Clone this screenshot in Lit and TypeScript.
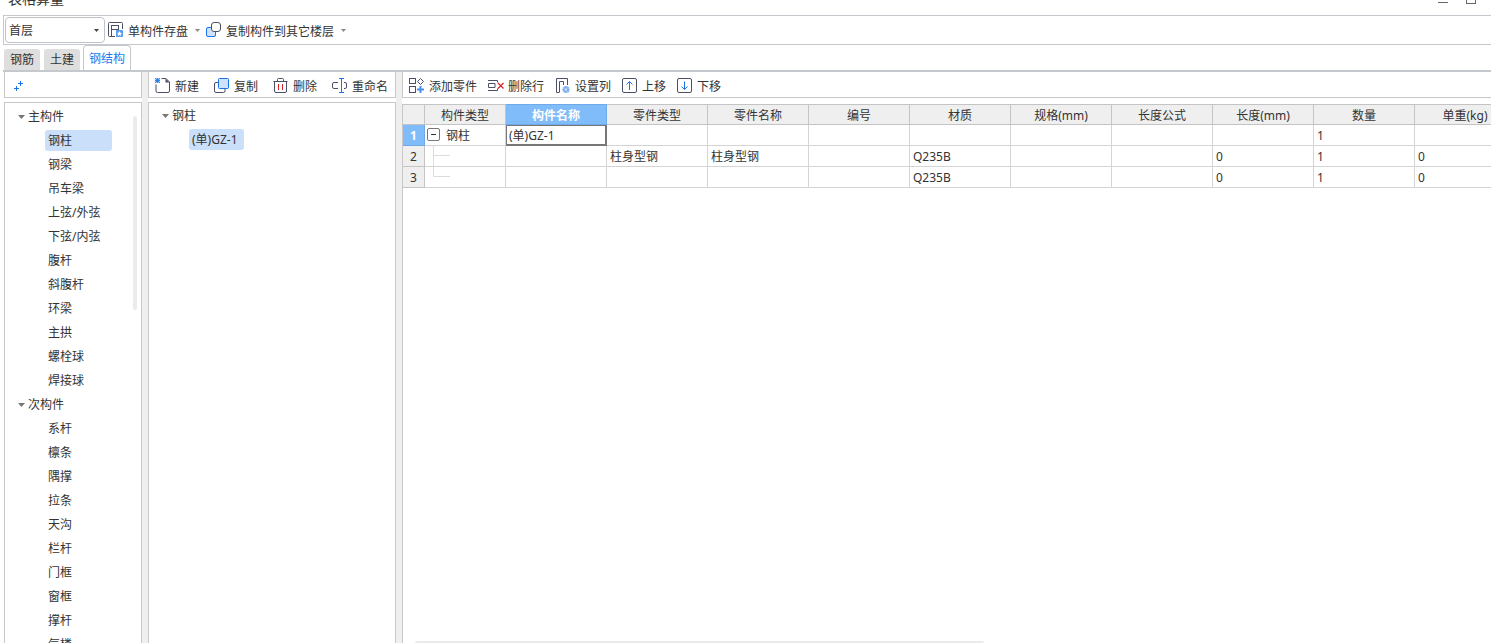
import { LitElement, html, svg, css, nothing } from "lit";
import { customElement, state } from "lit/decorators.js";
import { classMap } from "lit/directives/class-map.js";

const DARK = "#4b5066";
const BLUE = "#1a73e8";
const PALE = "#cfe2fb";

const icons: Record<string, unknown> = {
  save: svg`
    <g fill="none" stroke="${DARK}"><path d="M7 14.500H1.500a1 1 0 0 1-1-1v-12a1 1 0 0 1 1-1h12a1 1 0 0 1 1 1V7"/><path d="M3.500 3V14M3.500 3.500H11M10.500 3.500v4M3.500 7.500H11"/></g>
    <rect x="8" y="8" width="7" height="7" rx=".5" fill="#5d9df0"/>
    <path d="M11.500 9l.8 1.700 1.800.2-1.300 1.200.4 1.800-1.700-.9-1.700.9.4-1.800-1.300-1.200 1.800-.2z" fill="#fff"/>`,
  copyFloor: svg`
    <rect x=".5" y="5.500" width="9" height="9" rx="1.500" fill="${PALE}" stroke="${BLUE}"/>
    <rect x="5.500" y=".5" width="9" height="9" rx="2.500" fill="#fff" stroke="${DARK}"/>`,
  fresh: svg`
    <path d="M6.500 .5H11L14.500 4v9a1.500 1.500 0 0 1-1.500 1.500H2.500A1.500 1.500 0 0 1 1 13V6.500" fill="none" stroke="${DARK}"/>
    <path d="M10.500 .5V4.500H14.500z" fill="${DARK}"/>
    <rect width="5" height="5" fill="#a9cbf7"/><path d="M0 0l5 5M5 0L0 5M2.500 0v5M0 2.500h5" stroke="${BLUE}" stroke-width=".8" fill="none"/>`,
  copy: svg`
    <path d="M4 4.500H2A1.500 1.500 0 0 0 .5 6v7A1.500 1.500 0 0 0 2 14.500h7.500A1.500 1.500 0 0 0 11 13v-2" fill="none" stroke="${DARK}"/>
    <rect x="4.500" y=".5" width="10" height="10" rx="1" fill="${PALE}" stroke="${BLUE}"/>`,
  remove: svg`
    <path d="M.5 3.500h14M4.500 3V1.500a1 1 0 0 1 1-1h4a1 1 0 0 1 1 1V3M1.500 3.500v9.500A1.500 1.500 0 0 0 3 14.500h9a1.500 1.500 0 0 0 1.500-1.500V3.500" fill="none" stroke="${DARK}"/>
    <path d="M5.500 6v6M9.500 6v6" stroke="#d9222a" fill="none"/>`,
  rename: svg`
    <path d="M6 4.500H2A1.500 1.500 0 0 0 .5 6v3A1.500 1.500 0 0 0 2 10.500h4M12 4.500h1A1.500 1.500 0 0 1 14.500 6v3a1.500 1.500 0 0 1-1.500 1.500h-1" fill="none" stroke="${DARK}"/>
    <path d="M7 .5h5M7 14.500h5M9.500 .5v14" stroke="${BLUE}" fill="none"/>`,
  addPart: svg`
    <g fill="none" stroke="${DARK}"><rect x=".5" y=".5" width="6" height="5"/><rect x=".5" y="8.500" width="6" height="6"/><path d="M11.500 .5l3 3-3 3-3-3z"/></g>
    <path d="M11.500 8v7M8 11.500h7" stroke="#4a8fee" stroke-width="2" fill="none"/>`,
  removeRow: svg`
    <path d="M0 2.500h9.500v2M0 12.500h9.500v-2M.5 5.500h6.500v4H.5z" fill="none" stroke="${DARK}"/>
    <path d="M10 5l5.500 5.500M15.500 5L10 10.500" stroke="#d9222a" stroke-width="1.200" fill="none"/>`,
  columns: svg`
    <path d="M4.500 14V3.500h4V7M4.500 14.500h-3v-14h11V7" fill="none" stroke="${DARK}"/>
    <circle cx="11" cy="11.500" r="3.500" fill="#9fc4f6"/><path d="M9 9l5 5M13.500 9l-5 5M11 8v7M7.500 11.500h7" stroke="#4f92ee" stroke-width=".6"/><circle cx="11" cy="11.500" r="1" fill="#fff"/>`,
  up: svg`
    <rect x=".5" y=".5" width="14" height="14" rx="1.500" fill="none" stroke="${DARK}"/>
    <path d="M7.500 12V4M4.500 6.500l3-3 3 3" fill="none" stroke="${BLUE}"/>`,
  down: svg`
    <rect x=".5" y=".5" width="14" height="14" rx="1.500" fill="none" stroke="${DARK}"/>
    <path d="M7.500 3.500v8M4.500 8.500l3 3 3-3" fill="none" stroke="${BLUE}"/>`,
  plus: svg`
    <path d="M6.500 1v5M4 3.500h5M2.500 6v5M0 8.500h5" stroke="${BLUE}" fill="none"/>`,
};

const icon = (name: string) =>
  html`<svg class="icon" width="16" height="16" viewBox="0 0 16 16" aria-hidden="true">${icons[name]}</svg>`;

const caret = html`<svg class="caret" width="6" height="4" viewBox="0 0 6 4" aria-hidden="true"><path d="M0 0h5L2.500 3z" fill="currentColor" /></svg>`;
const twisty = html`<svg class="twisty" width="7" height="5" viewBox="0 0 7 5" aria-hidden="true"><path d="M0 0h7L3.500 4z" fill="currentColor" /></svg>`;

const TREE = [
  { name: "主构件", items: ["钢柱", "钢梁", "吊车梁", "上弦/外弦", "下弦/内弦", "腹杆", "斜腹杆", "环梁", "主拱", "螺栓球", "焊接球"] },
  { name: "次构件", items: ["系杆", "檩条", "隅撑", "拉条", "天沟", "栏杆", "门框", "窗框", "撑杆", "气楼"] },
];

const COLUMNS = ["构件类型", "构件名称", "零件类型", "零件名称", "编号", "材质", "规格(mm)", "长度公式", "长度(mm)", "数量", "单重(kg)"];

const ROWS = [
  ["钢柱", "(单)GZ-1", "", "", "", "", "", "", "", "1", ""],
  ["", "", "柱身型钢", "柱身型钢", "", "Q235B", "", "", "0", "1", "0"],
  ["", "", "", "", "", "Q235B", "", "", "0", "1", "0"],
];

@customElement("app-root")
export class AppRoot extends LitElement {
  @state() private tab = "钢结构";
  @state() private selected = "钢柱";

  static styles = css`
    :host {
      display: flex;
      flex-direction: column;
      height: 100vh;
      overflow: hidden;
      background: #fff;
      color: #333;
      font: 12px/16px "Noto Sans", "Noto Sans CJK SC", sans-serif;
    }
    * { box-sizing: border-box; }
    button, select {
      font: inherit;
      color: inherit;
      background: none;
      border: 0;
      margin: 0;
      padding: 0;
    }
    .titlebar {
      display: flex;
      align-items: flex-end;
      justify-content: space-between;
      height: 15px;
      flex: none;
      padding: 0 15px 0 8px;
    }
    .title {
      margin: 0;
      padding-bottom: 6px;
      font-size: 14px;
      line-height: 20px;
      font-weight: 400;
    }
    .window-buttons { display: flex; gap: 18px; padding-bottom: 11px; }
    .window-buttons button { display: flex; }
    .toolbar {
      display: flex;
      align-items: center;
      flex: none;
      height: 30px;
      margin-left: 3px;
      padding-left: 1px;
      border: 1px solid #c5c8cc;
      border-right: 0;
    }
    .select { position: relative; display: flex; margin-right: 3px; }
    .select select {
      appearance: none;
      width: 100px;
      height: 26px;
      padding: 2px 0 0 3px;
      border: 1px solid #bfc2c6;
      border-radius: 4px;
      background: #fff;
    }
    .select .caret { position: absolute; right: 5px; top: 12px; color: #444; pointer-events: none; }
    .tool {
      display: flex;
      align-items: center;
      gap: 4px;
      white-space: nowrap;
    }
    .tool span { padding-top: 4px; }
    .tool .caret { margin: 2px 5px 0 3px; color: #888; }
    .icon { display: block; flex: none; }
    .tabs {
      display: flex;
      align-items: flex-end;
      gap: 4px;
      flex: none;
      height: 27px;
      margin-left: 3px;
      padding-left: 1px;
      border-bottom: 2px solid #c5c8cc;
    }
    .tab {
      height: 21px;
      padding: 1px 6px 0;
      border-radius: 3px 3px 0 0;
      background: #dedede;
    }
    .tab.active {
      height: 25px;
      padding: 2px 5px 0;
      margin-left: -1px;
      border: 1px solid #c5c8cc;
      border-bottom: 0;
      border-radius: 4px 4px 0 0;
      background: #fff;
      color: #1a7af0;
    }
    .main {
      display: grid;
      grid-template-columns: 138px 6px 248px 6px minmax(0, 1fr);
      flex: 1;
      min-height: 0;
      margin-left: 4px;
    }
    .splitter { background: #efefef; }
    .column { display: flex; flex-direction: column; gap: 4px; min-width: 0; min-height: 0; }
    .bar {
      display: flex;
      align-items: center;
      flex: none;
      height: 26px;
      gap: 15px;
      padding-left: 6px;
      border: 1px solid #c8c8c8;
      border-top: 0;
    }
    .bar .icon { margin-top: 2px; }
    .bar.parts { gap: 11px; border-right: 0; }
    .bar.tight { padding: 5px 0 0 9px; }
    .panel {
      position: relative;
      flex: 1;
      min-height: 0;
      overflow: hidden;
      padding-top: 2px;
      border: 1px solid #c8c8c8;
      border-bottom: 0;
    }
    .tree { margin: 0; padding: 0; list-style: none; }
    .node {
      display: flex;
      align-items: center;
      height: 24px;
      gap: 3px;
      padding-left: 13px;
    }
    .twisty { color: #777; }
    .leaf { display: flex; align-items: flex-start; height: 24px; padding-left: 40px; }
    .leaf button {
      min-width: 67px;
      height: 21px;
      margin-top: 1px;
      padding: 1px 3px 0;
      border-radius: 3px;
      text-align: left;
      white-space: nowrap;
    }
    .leaf button.selected { background: #c9dffa; }
    .panel.components { padding-top: 1px; }
    .components .leaf button { min-width: 55px; }
    .vthumb {
      position: absolute;
      top: 13px;
      right: 4px;
      width: 4px;
      height: 194px;
      border-radius: 2px;
      background: #ebebeb;
    }
    .sheet {
      position: relative;
      flex: 1;
      min-height: 0;
      overflow: hidden;
      margin-top: 2px;
      border-left: 1px solid #c8c8c8;
    }
    .hthumb {
      position: absolute;
      left: 12px;
      bottom: -2px;
      width: 569px;
      height: 4px;
      border-radius: 2px;
      background: #ebebeb;
    }
    table {
      width: 1113px;
      table-layout: fixed;
      border-collapse: separate;
      border-spacing: 0;
    }
    .col-index { width: 22px; }
    .col-type { width: 81px; }
    th, td {
      height: 21px;
      padding: 2px 2px 0 3px;
      border-right: 1px solid #d4d4d4;
      border-bottom: 1px solid #d4d4d4;
      text-align: left;
      font-weight: 400;
      white-space: nowrap;
      overflow: hidden;
    }
    th { padding: 2px 0 0; background: #efefef; text-align: center; border-color: #c4c4c4; }
    thead th { border-top: 1px solid #c4c4c4; }
    th.current {
      background: #80bbfa;
      border-color: #6fa9e8;
      color: #fff;
      font-weight: 700;
    }
    td.current { box-shadow: inset 1px 1px #777, inset -1px -1px #777; border-color: #777; }
    .branch { display: flex; align-items: center; height: 20px; }
    .branch span { padding-top: 2px; }
    td.type { padding: 0 0 0 2px; }
    .toggle {
      display: flex;
      align-items: center;
      justify-content: center;
      width: 13px;
      height: 13px;
      margin: 0 6px 2px 0;
      border: 1px solid #777;
      border-radius: 2px;
    }
    .line { display: block; }
  `;

  private tool(name: string, label: string, menu = false) {
    return html`<button class="tool">${icon(name)}<span>${label}</span>${menu ? caret : nothing}</button>`;
  }

  private typeCell(text: string, row: number) {
    if (row === 0) {
      return html`<div class="branch">
        <button class="toggle" aria-label="折叠"><svg width="5" height="1" viewBox="0 0 5 1"><path d="M0 0h5v1H0z" fill="#333" /></svg></button><span>${text}</span>
      </div>`;
    }
    const d = row === 1 ? "M6.500 0v20M7 9.500h16" : "M6.500 0v9.500h16.500";
    return html`<svg class="line" width="26" height="20" viewBox="0 0 26 20" aria-hidden="true"><path d=${d} fill="none" stroke="#dcdcdc" /></svg>`;
  }

  render() {
    return html`
      <header class="titlebar">
        <h1 class="title">表格算量</h1>
        <div class="window-buttons">
          <button aria-label="最小化"><svg width="10" height="10" viewBox="0 0 10 10"><path d="M0 8.500h10" stroke="#666" /></svg></button>
          <button aria-label="最大化"><svg width="10" height="10" viewBox="0 0 10 10"><rect x=".5" y=".5" width="9" height="9" fill="none" stroke="#666" /></svg></button>
        </div>
      </header>
      <div class="toolbar">
        <div class="select">
          <select aria-label="楼层"><option>首层</option></select>
          ${caret}
        </div>
        ${this.tool("save", "单构件存盘", true)}
        ${this.tool("copyFloor", "复制构件到其它楼层", true)}
      </div>
      <nav class="tabs" role="tablist">
        ${["钢筋", "土建", "钢结构"].map(
          (t) => html`<button
            role="tab"
            aria-selected=${t === this.tab}
            class=${classMap({ tab: true, active: t === this.tab })}
            @click=${() => (this.tab = t)}
          >${t}</button>`
        )}
      </nav>
      <main class="main">
        <section class="column">
          <div class="bar tight"><button class="tool" aria-label="展开">${icon("plus")}</button></div>
          <div class="panel">
            ${TREE.map(
              (g) => html`<div class="node">${twisty}<span>${g.name}</span></div>
                <ul class="tree">
                  ${g.items.map(
                    (i) => html`<li class="leaf">
                      <button class=${classMap({ selected: i === this.selected })} @click=${() => (this.selected = i)}>${i}</button>
                    </li>`
                  )}
                </ul>`
            )}
            <div class="vthumb"></div>
          </div>
        </section>
        <div class="splitter"></div>
        <section class="column">
          <div class="bar">
            ${this.tool("fresh", "新建")}${this.tool("copy", "复制")}${this.tool("remove", "删除")}${this.tool("rename", "重命名")}
          </div>
          <div class="panel components">
            <div class="node">${twisty}<span>钢柱</span></div>
            <ul class="tree">
              <li class="leaf"><button class="selected">(单)GZ-1</button></li>
            </ul>
          </div>
        </section>
        <div class="splitter"></div>
        <section class="column">
          <div class="bar parts">
            ${this.tool("addPart", "添加零件")}${this.tool("removeRow", "删除行")}${this.tool("columns", "设置列")}${this.tool("up", "上移")}${this.tool("down", "下移")}
          </div>
          <div class="sheet">
            <table>
              <colgroup>
                <col class="col-index" />
                <col class="col-type" />
                ${COLUMNS.slice(1).map(() => html`<col />`)}
              </colgroup>
              <thead>
                <tr>
                  <th></th>
                  ${COLUMNS.map((c, i) => html`<th scope="col" class=${classMap({ current: i === 1 })}>${c}</th>`)}
                </tr>
              </thead>
              <tbody>
                ${ROWS.map(
                  (r, ri) => html`<tr>
                    <th scope="row" class=${classMap({ current: ri === 0 })}>${ri + 1}</th>
                    ${r.map((v, ci) =>
                      ci === 0
                        ? html`<td class="type">${this.typeCell(v, ri)}</td>`
                        : html`<td class=${classMap({ current: ri === 0 && ci === 1 })}>${v}</td>`
                    )}
                  </tr>`
                )}
              </tbody>
            </table>
            <div class="hthumb"></div>
          </div>
        </section>
      </main>
    `;
  }
}
